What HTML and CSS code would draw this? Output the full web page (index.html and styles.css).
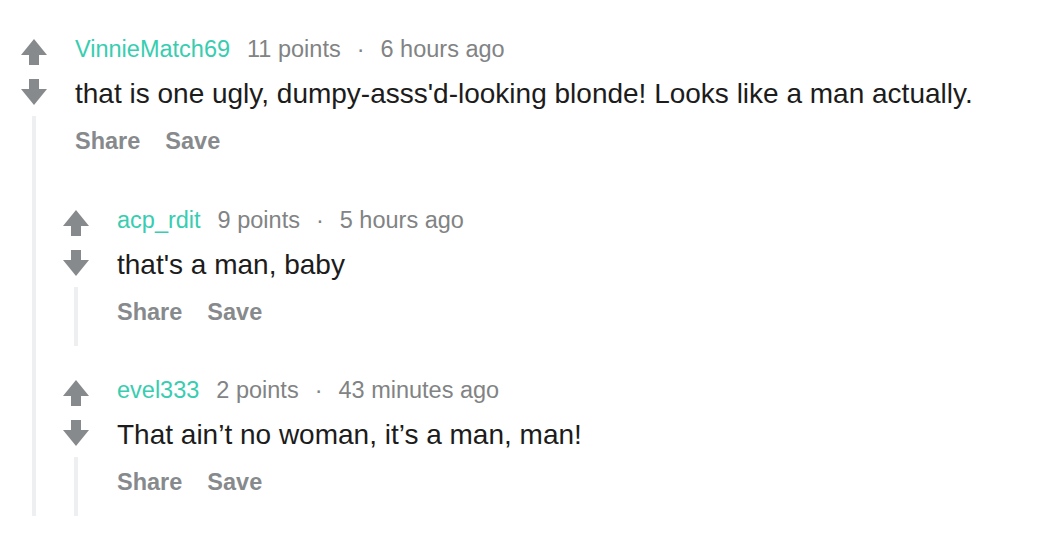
FILE: index.html
```html
<!DOCTYPE html>
<html lang="en">
<head>
    <meta charset="UTF-8">
    <meta name="viewport" content="width=device-width, initial-scale=1.0">
    <title>Comments</title>
    <link rel="stylesheet" href="styles.css">
</head>
<body>
    <div id="thread">
        <div class="comment">
            <div class="votes">
                <svg class="arrow" viewBox="0 0 26 26"><path d="M13 0 L26 16 L18 16 L18 26 L8 26 L8 16 L0 16 Z"/></svg>
                <svg class="arrow down" viewBox="0 0 26 26"><path d="M13 26 L26 10 L18 10 L18 0 L8 0 L8 10 L0 10 Z"/></svg>
                <div class="thread-line"></div>
            </div>
            <div class="main">
                <div class="meta"><span class="author">VinnieMatch69</span><span>11 points</span><span class="dot">·</span><span>6 hours ago</span></div>
                <div class="body">that is one ugly, dumpy-asss'd-looking blonde! Looks like a man actually.</div>
                <div class="actions"><span>Share</span><span>Save</span></div>

                <div class="children">
                    <div class="comment">
                        <div class="votes">
                            <svg class="arrow" viewBox="0 0 26 26"><path d="M13 0 L26 16 L18 16 L18 26 L8 26 L8 16 L0 16 Z"/></svg>
                            <svg class="arrow down" viewBox="0 0 26 26"><path d="M13 26 L26 10 L18 10 L18 0 L8 0 L8 10 L0 10 Z"/></svg>
                            <div class="thread-line"></div>
                        </div>
                        <div class="main">
                            <div class="meta"><span class="author">acp_rdit</span><span>9 points</span><span class="dot">·</span><span>5 hours ago</span></div>
                            <div class="body">that's a man, baby</div>
                            <div class="actions"><span>Share</span><span>Save</span></div>
                        </div>
                    </div>
                    <div class="comment">
                        <div class="votes">
                            <svg class="arrow" viewBox="0 0 26 26"><path d="M13 0 L26 16 L18 16 L18 26 L8 26 L8 16 L0 16 Z"/></svg>
                            <svg class="arrow down" viewBox="0 0 26 26"><path d="M13 26 L26 10 L18 10 L18 0 L8 0 L8 10 L0 10 Z"/></svg>
                            <div class="thread-line"></div>
                        </div>
                        <div class="main">
                            <div class="meta"><span class="author">evel333</span><span>2 points</span><span class="dot">·</span><span>43 minutes ago</span></div>
                            <div class="body">That ain’t no woman, it’s a man, man!</div>
                            <div class="actions"><span>Share</span><span>Save</span></div>
                        </div>
                    </div>
                </div>
            </div>
        </div>
    </div>
</body>
</html>
```

FILE: styles.css
```css
body {
    font-family: "Liberation Sans", Arial, sans-serif;
    background-color: #ffffff;
    margin: 0;
    padding: 0;
}
#thread {
    padding: 26px 0 0 13px;
}
.comment {
    display: flex;
}
.votes {
    width: 42px;
    flex-shrink: 0;
    display: flex;
    flex-direction: column;
    align-items: center;
    padding-top: 13px;
}
.arrow {
    width: 26px;
    height: 26px;
    fill: #878a8c;
    display: block;
}
.arrow.down {
    margin-top: 14px;
}
.thread-line {
    width: 4px;
    flex: 1;
    margin-top: 11px;
    background-color: #edeff1;
}
.main {
    flex: 1;
}
.meta,
.body,
.actions {
    padding-left: 20px;
}
.meta {
    font-size: 23.5px;
    line-height: 46px;
    color: #818384;
}
.author {
    color: #38cdb0;
    margin-right: 17px;
}
.dot {
    margin: 0 16px;
}
.body {
    font-size: 28px;
    line-height: 44px;
    color: #1c1c1c;
}
.actions {
    font-size: 23.5px;
    font-weight: bold;
    line-height: 50px;
    color: #878a8c;
    padding-bottom: 9px;
}
.actions span {
    margin-right: 25px;
}
.children {
    display: flex;
    flex-direction: column;
    gap: 21px;
    padding-top: 22px;
}
```
